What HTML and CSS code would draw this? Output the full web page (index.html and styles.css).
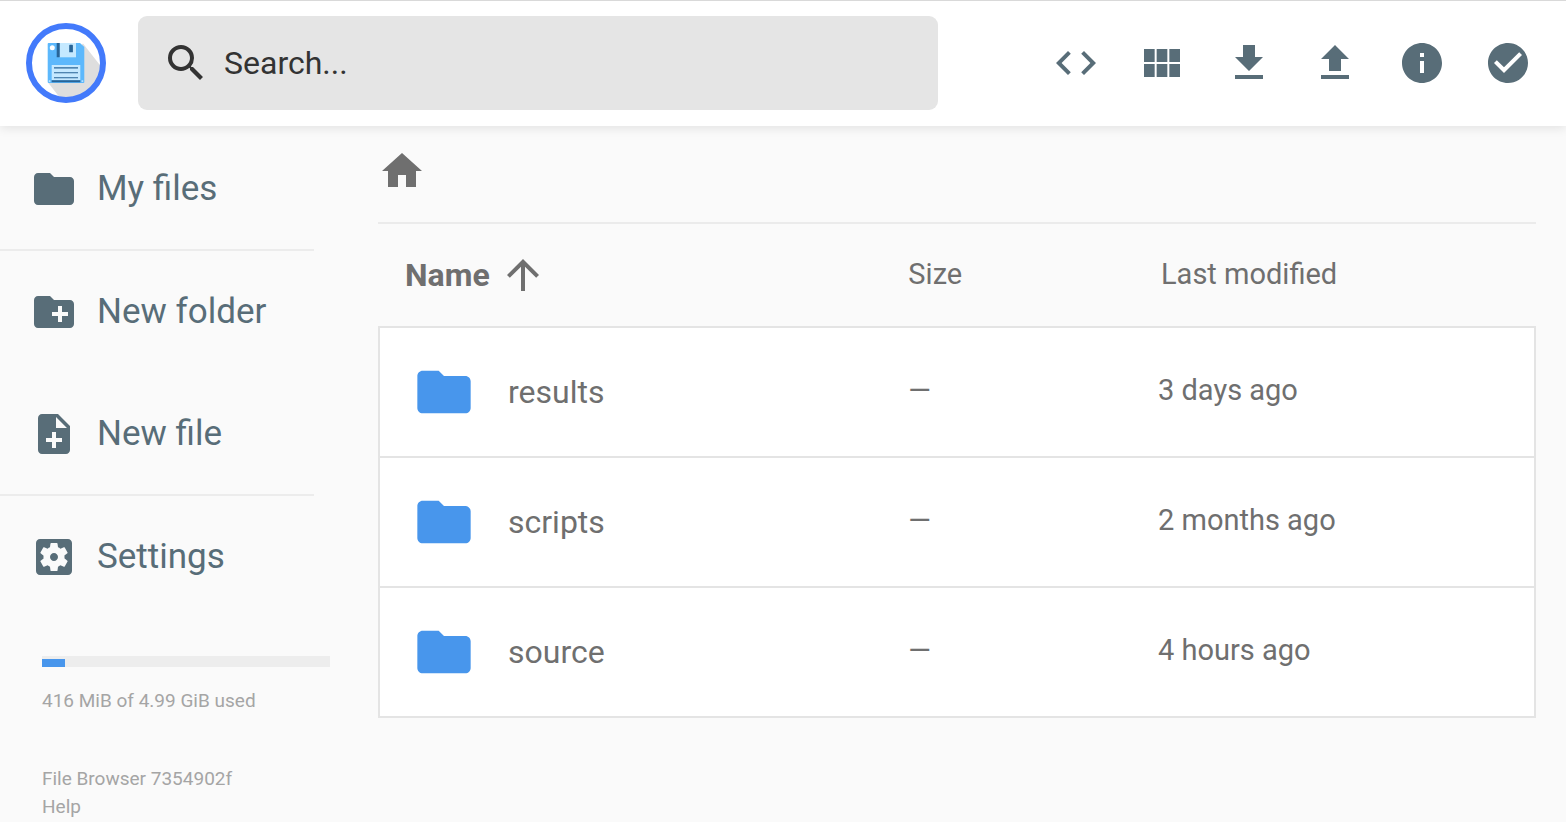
FILE: index.html
```html
<!DOCTYPE html>
<html lang="en">
<head>
<meta charset="utf-8">
<title>File Browser</title>
<link rel="stylesheet" href="styles.css">
</head>
<body>
<header class="topbar">
  <svg class="logo" viewBox="0 0 80 80" role="img" aria-label="File Browser">
    <clipPath id="disc"><circle cx="40" cy="40" r="35"/></clipPath>
    <circle cx="40" cy="40" r="37" fill="#fff"/>
    <path d="M57 20.500L80 50V80H38L22 59.500z" fill="#dedede" clip-path="url(#disc)"/>
    <circle cx="40" cy="40" r="37" fill="none" stroke="#437afb" stroke-width="6"/>
    <path d="M22.500 20H54l4.300 4V59q0 1-1 1H23q-1.300 0-1.300-1V21q0-1 .8-1z" fill="#5cb8fc"/>
    <path d="M33.500 20H50v14.300H33.500z" fill="#c5e9ff"/>
    <path d="M30.700 20h3v14.300h-3zM43.200 22.500q0-.7.700-.7h2.300q.7 0 .7.700v6.800h-3.700z" fill="#286497"/>
    <circle cx="26.300" cy="24.700" r="2.500" fill="#fff"/>
    <path d="M25.700 42h28.600v15.300H25.700z" fill="#c5e9ff"/>
    <path d="M25.700 57.300h28.600v1.900H25.700zM28 44.300h24v1.100H28zM28 49.200h24v1H28zM28 54.300h24v1H28z" fill="#286497"/>
    <path d="M22.800 57.300h1.600V59h-1.600zM55.600 57.300h1.600V59h-1.600z" fill="#b9e2ff"/>
  </svg>
  <label class="search">
    <svg class="icon" viewBox="0 0 24 24" aria-hidden="true"><path d="M15.500 14h-.79l-.28-.27A6.471 6.471 0 0 0 16 9.500 6.500 6.500 0 1 0 9.500 16c1.610 0 3.090-.59 4.230-1.570l.27.28v.79l5 4.990L20.490 19l-4.990-5zm-6 0C7.010 14 5 11.990 5 9.500S7.010 5 9.500 5 14 7.010 14 9.500 11.990 14 9.500 14z"/></svg>
    <input class="search-input" type="text" placeholder="Search..." aria-label="Search">
  </label>
  <div class="actions">
    <button class="action" aria-label="Toggle shell"><svg class="icon" viewBox="0 0 24 24"><path d="M9.400 16.600L4.800 12l4.600-4.600L8 6l-6 6 6 6 1.400-1.400zm5.200 0l4.600-4.600-4.600-4.600L16 6l6 6-6 6-1.400-1.400z"/></svg></button>
    <button class="action" aria-label="Switch view"><svg class="icon" viewBox="0 0 24 24"><path d="M14.670 5v6.500H9.330V5h5.340zm1 6.500H21V5h-5.330v6.500zm-1 7.500v-6.500H9.330V19h5.340zm1-6.500V19H21v-6.500h-5.330zm-7.340 0H3V19h5.330v-6.500zm0-1V5H3v6.500h5.330z"/></svg></button>
    <button class="action" aria-label="Download"><svg class="icon" viewBox="0 0 24 24"><path d="M19 9h-4V3H9v6H5l7 7 7-7zM5 18v2h14v-2H5z"/></svg></button>
    <button class="action" aria-label="Upload"><svg class="icon" viewBox="0 0 24 24"><path d="M9 16h6v-6h4l-7-7-7 7h4zm-4 2h14v2H5z"/></svg></button>
    <button class="action" aria-label="Info"><svg class="icon" viewBox="0 0 24 24"><path d="M12 2C6.480 2 2 6.480 2 12s4.480 10 10 10 10-4.480 10-10S17.520 2 12 2zm1 15h-2v-6h2v6zm0-8h-2V7h2v2z"/></svg></button>
    <button class="action" aria-label="Select multiple"><svg class="icon" viewBox="0 0 24 24"><path d="M12 2C6.480 2 2 6.480 2 12s4.480 10 10 10 10-4.480 10-10S17.520 2 12 2zm-2 15l-5-5 1.410-1.410L10 14.170l7.590-7.590L19 8l-9 9z"/></svg></button>
  </div>
</header>
<div class="layout">
  <aside class="sidebar">
    <nav class="nav">
      <div class="nav-group">
        <button class="nav-item"><svg class="icon" viewBox="0 0 24 24"><path d="M10 4H4c-1.100 0-1.990.9-1.990 2L2 18c0 1.100.9 2 2 2h16c1.100 0 2-.9 2-2V8c0-1.100-.9-2-2-2h-8l-2-2z"/></svg><span>My files</span></button>
      </div>
      <div class="nav-group">
        <button class="nav-item"><svg class="icon" viewBox="0 0 24 24"><path d="M20 6h-8l-2-2H4c-1.110 0-1.990.89-1.990 2L2 18c0 1.110.89 2 2 2h16c1.110 0 2-.89 2-2V8c0-1.110-.89-2-2-2zm-1 8h-3v3h-2v-3h-3v-2h3V9h2v3h3v2z"/></svg><span>New folder</span></button>
        <button class="nav-item"><svg class="icon" viewBox="0 0 24 24"><path d="M14 2H6c-1.100 0-1.990.9-1.990 2L4 20c0 1.100.89 2 1.990 2H18c1.100 0 2-.9 2-2V8l-6-6zm2 14h-3v3h-2v-3H8v-2h3v-3h2v3h3v2zm-3-7V3.500L18.500 9H13z"/></svg><span>New file</span></button>
      </div>
      <div class="nav-group">
        <button class="nav-item"><svg class="icon" viewBox="0 0 24 24"><path d="M12 10c-1.100 0-2 .9-2 2s.9 2 2 2 2-.9 2-2-.9-2-2-2zm7-7H5c-1.110 0-2 .9-2 2v14c0 1.100.89 2 2 2h14c1.110 0 2-.9 2-2V5c0-1.100-.89-2-2-2zm-1.750 9c0 .23-.02.46-.05.68l1.480 1.160c.13.11.17.3.08.45l-1.400 2.420c-.09.15-.27.21-.43.15l-1.740-.7c-.36.28-.76.51-1.180.69l-.26 1.850c-.03.17-.18.3-.35.3h-2.800c-.17 0-.32-.13-.35-.29l-.26-1.850c-.43-.18-.82-.41-1.180-.69l-1.740.7c-.16.06-.34 0-.43-.15l-1.400-2.420c-.09-.15-.05-.34.08-.45l1.480-1.160c-.03-.23-.05-.46-.05-.69 0-.23.02-.46.05-.68l-1.480-1.160c-.13-.11-.17-.3-.08-.45l1.400-2.420c.09-.15.27-.21.43-.15l1.740.7c.36-.28.76-.51 1.180-.69l.26-1.850c.03-.17.18-.3.35-.3h2.800c.17 0 .32.13.35.29l.26 1.850c.43.18.82.41 1.180.69l1.740-.7c.16-.06.34 0 .43.15l1.400 2.420c.09.15.05.34-.08.45l-1.480 1.160c.03.23.05.46.05.69z"/></svg><span>Settings</span></button>
      </div>
    </nav>
    <div class="usage">
      <div class="usage-track"><div class="usage-bar" style="width: 8%"></div></div>
      <p class="usage-text">416 MiB of 4.99 GiB used</p>
    </div>
    <div class="credits">
      <a class="credit" href="#">File Browser 7354902f</a>
      <a class="credit" href="#">Help</a>
    </div>
  </aside>
  <main class="main">
    <div class="breadcrumbs">
      <a class="crumb" href="#" aria-label="Home"><svg class="icon" viewBox="0 0 24 24"><path d="M10 20v-6h4v6h5v-8h3L12 3 2 12h3v8z"/></svg></a>
    </div>
    <table class="listing">
      <thead>
        <tr>
          <th class="col-name" scope="col"><span class="sorted">Name <svg class="icon" viewBox="0 0 24 24" aria-hidden="true"><path d="M4 12l1.410 1.410L11 7.830V20h2V7.830l5.580 5.590L20 12l-8-8-8 8z"/></svg></span></th>
          <th class="col-size" scope="col">Size</th>
          <th class="col-date" scope="col">Last modified</th>
        </tr>
      </thead>
      <tbody>
        <tr>
          <td><a class="entry" href="#"><svg class="folder" viewBox="0 0 24 24" aria-hidden="true"><path d="M10 4H4c-1.100 0-1.990.9-1.990 2L2 18c0 1.100.9 2 2 2h16c1.100 0 2-.9 2-2V8c0-1.100-.9-2-2-2h-8l-2-2z"/></svg>results</a></td>
          <td>—</td>
          <td>3 days ago</td>
        </tr>
        <tr>
          <td><a class="entry" href="#"><svg class="folder" viewBox="0 0 24 24" aria-hidden="true"><path d="M10 4H4c-1.100 0-1.990.9-1.990 2L2 18c0 1.100.9 2 2 2h16c1.100 0 2-.9 2-2V8c0-1.100-.9-2-2-2h-8l-2-2z"/></svg>scripts</a></td>
          <td>—</td>
          <td>2 months ago</td>
        </tr>
        <tr>
          <td><a class="entry" href="#"><svg class="folder" viewBox="0 0 24 24" aria-hidden="true"><path d="M10 4H4c-1.100 0-1.990.9-1.990 2L2 18c0 1.100.9 2 2 2h16c1.100 0 2-.9 2-2V8c0-1.100-.9-2-2-2h-8l-2-2z"/></svg>source</a></td>
          <td>—</td>
          <td>4 hours ago</td>
        </tr>
      </tbody>
    </table>
  </main>
</div>
</body>
</html>
```

FILE: styles.css
```css
* {
  box-sizing: border-box;
}

body {
  margin: 0;
  background: #fafafa;
  color: #6f6f6f;
  font-family: Roboto, "Liberation Sans", sans-serif;
}

a {
  color: inherit;
  text-decoration: none;
}

button {
  margin: 0;
  padding: 0;
  border: 0;
  background: none;
  color: #586d78;
  font: inherit;
  cursor: pointer;
}

.icon {
  display: block;
  flex: none;
  width: 48px;
  height: 48px;
  fill: currentColor;
}

.topbar {
  display: flex;
  align-items: center;
  height: 126px;
  padding: 0 34px 2px 26px;
  border-top: 1px solid #d9d9d9;
  background: #fff;
  box-shadow: 0 2px 10px rgba(0, 0, 0, 0.1);
}

.logo {
  flex: none;
  width: 80px;
  height: 80px;
  margin-right: 32px;
}

.search {
  display: flex;
  flex: 0 1 800px;
  align-items: center;
  gap: 14px;
  height: 94px;
  padding: 0 24px;
  border-radius: 9px;
  background: #e5e5e5;
  color: #333;
}

.search-input {
  flex: 1;
  min-width: 0;
  padding: 0;
  border: 0;
  outline: 0;
  background: none;
  color: #333;
  font: 32px/40px Roboto, "Liberation Sans", sans-serif;
}

.search-input::placeholder {
  color: #333;
  opacity: 1;
}

.actions {
  display: flex;
  flex: none;
  justify-content: space-between;
  width: 480px;
  margin-left: auto;
}

.layout {
  display: flex;
}

.sidebar {
  flex: none;
  width: 346px;
  padding-top: 2px;
}

.nav {
  margin-right: 32px;
}

.nav-group + .nav-group {
  margin-top: -1px;
  border-top: 2px solid #ececec;
}

.nav-item {
  display: flex;
  align-items: center;
  gap: 19px;
  width: 100%;
  height: 122px;
  padding-left: 30px;
  font-size: 35px;
  line-height: 42px;
}

.usage {
  margin: 38px 16px 0 42px;
}

.usage-track {
  height: 11px;
  padding-top: 3px;
  background: #ededed;
}

.usage-bar {
  height: 8px;
  background: #4896ec;
}

.usage-text,
.credit {
  margin: 0;
  color: #a5a5a5;
  font-size: 19px;
  line-height: 28px;
}

.usage-text {
  margin-top: 20px;
}

.credits {
  display: flex;
  flex-direction: column;
  align-items: flex-start;
  margin: 50px 16px 0 42px;
}

.main {
  flex: 1;
  min-width: 0;
  padding: 0 30px 0 32px;
}

.breadcrumbs {
  display: flex;
  align-items: center;
  height: 98px;
  padding-bottom: 6px;
  border-bottom: 2px solid #ebebeb;
}

.listing {
  width: 100%;
  border-collapse: separate;
  border-spacing: 0;
  table-layout: fixed;
  font-size: 29px;
  line-height: 36px;
}

.listing th {
  height: 102px;
  padding: 0 0 2px;
  font-weight: 400;
  text-align: left;
}

.listing .col-name {
  width: 45.8%;
  padding: 0 0 0 27px;
  font-size: 32px;
  font-weight: 700;
}

.listing .col-size {
  width: 21.3%;
}

.listing .col-date {
  padding-left: 6px;
}

.sorted {
  display: flex;
  align-items: center;
  gap: 9px;
}

.listing td {
  height: 130px;
  padding: 0 0 4px;
  border-top: 2px solid #e4e4e4;
  background: #fff;
}

.listing td:first-child {
  padding: 0 0 0 32px;
  border-left: 2px solid #e4e4e4;
}

.listing td:last-child {
  padding-left: 3px;
  border-right: 2px solid #e4e4e4;
}

.listing tbody tr:last-child td {
  height: 132px;
  border-bottom: 2px solid #e4e4e4;
}

.entry {
  display: flex;
  align-items: center;
  gap: 32px;
  font-size: 32px;
}

.folder {
  display: block;
  flex: none;
  width: 64px;
  height: 64px;
  fill: #4896ec;
}
```
